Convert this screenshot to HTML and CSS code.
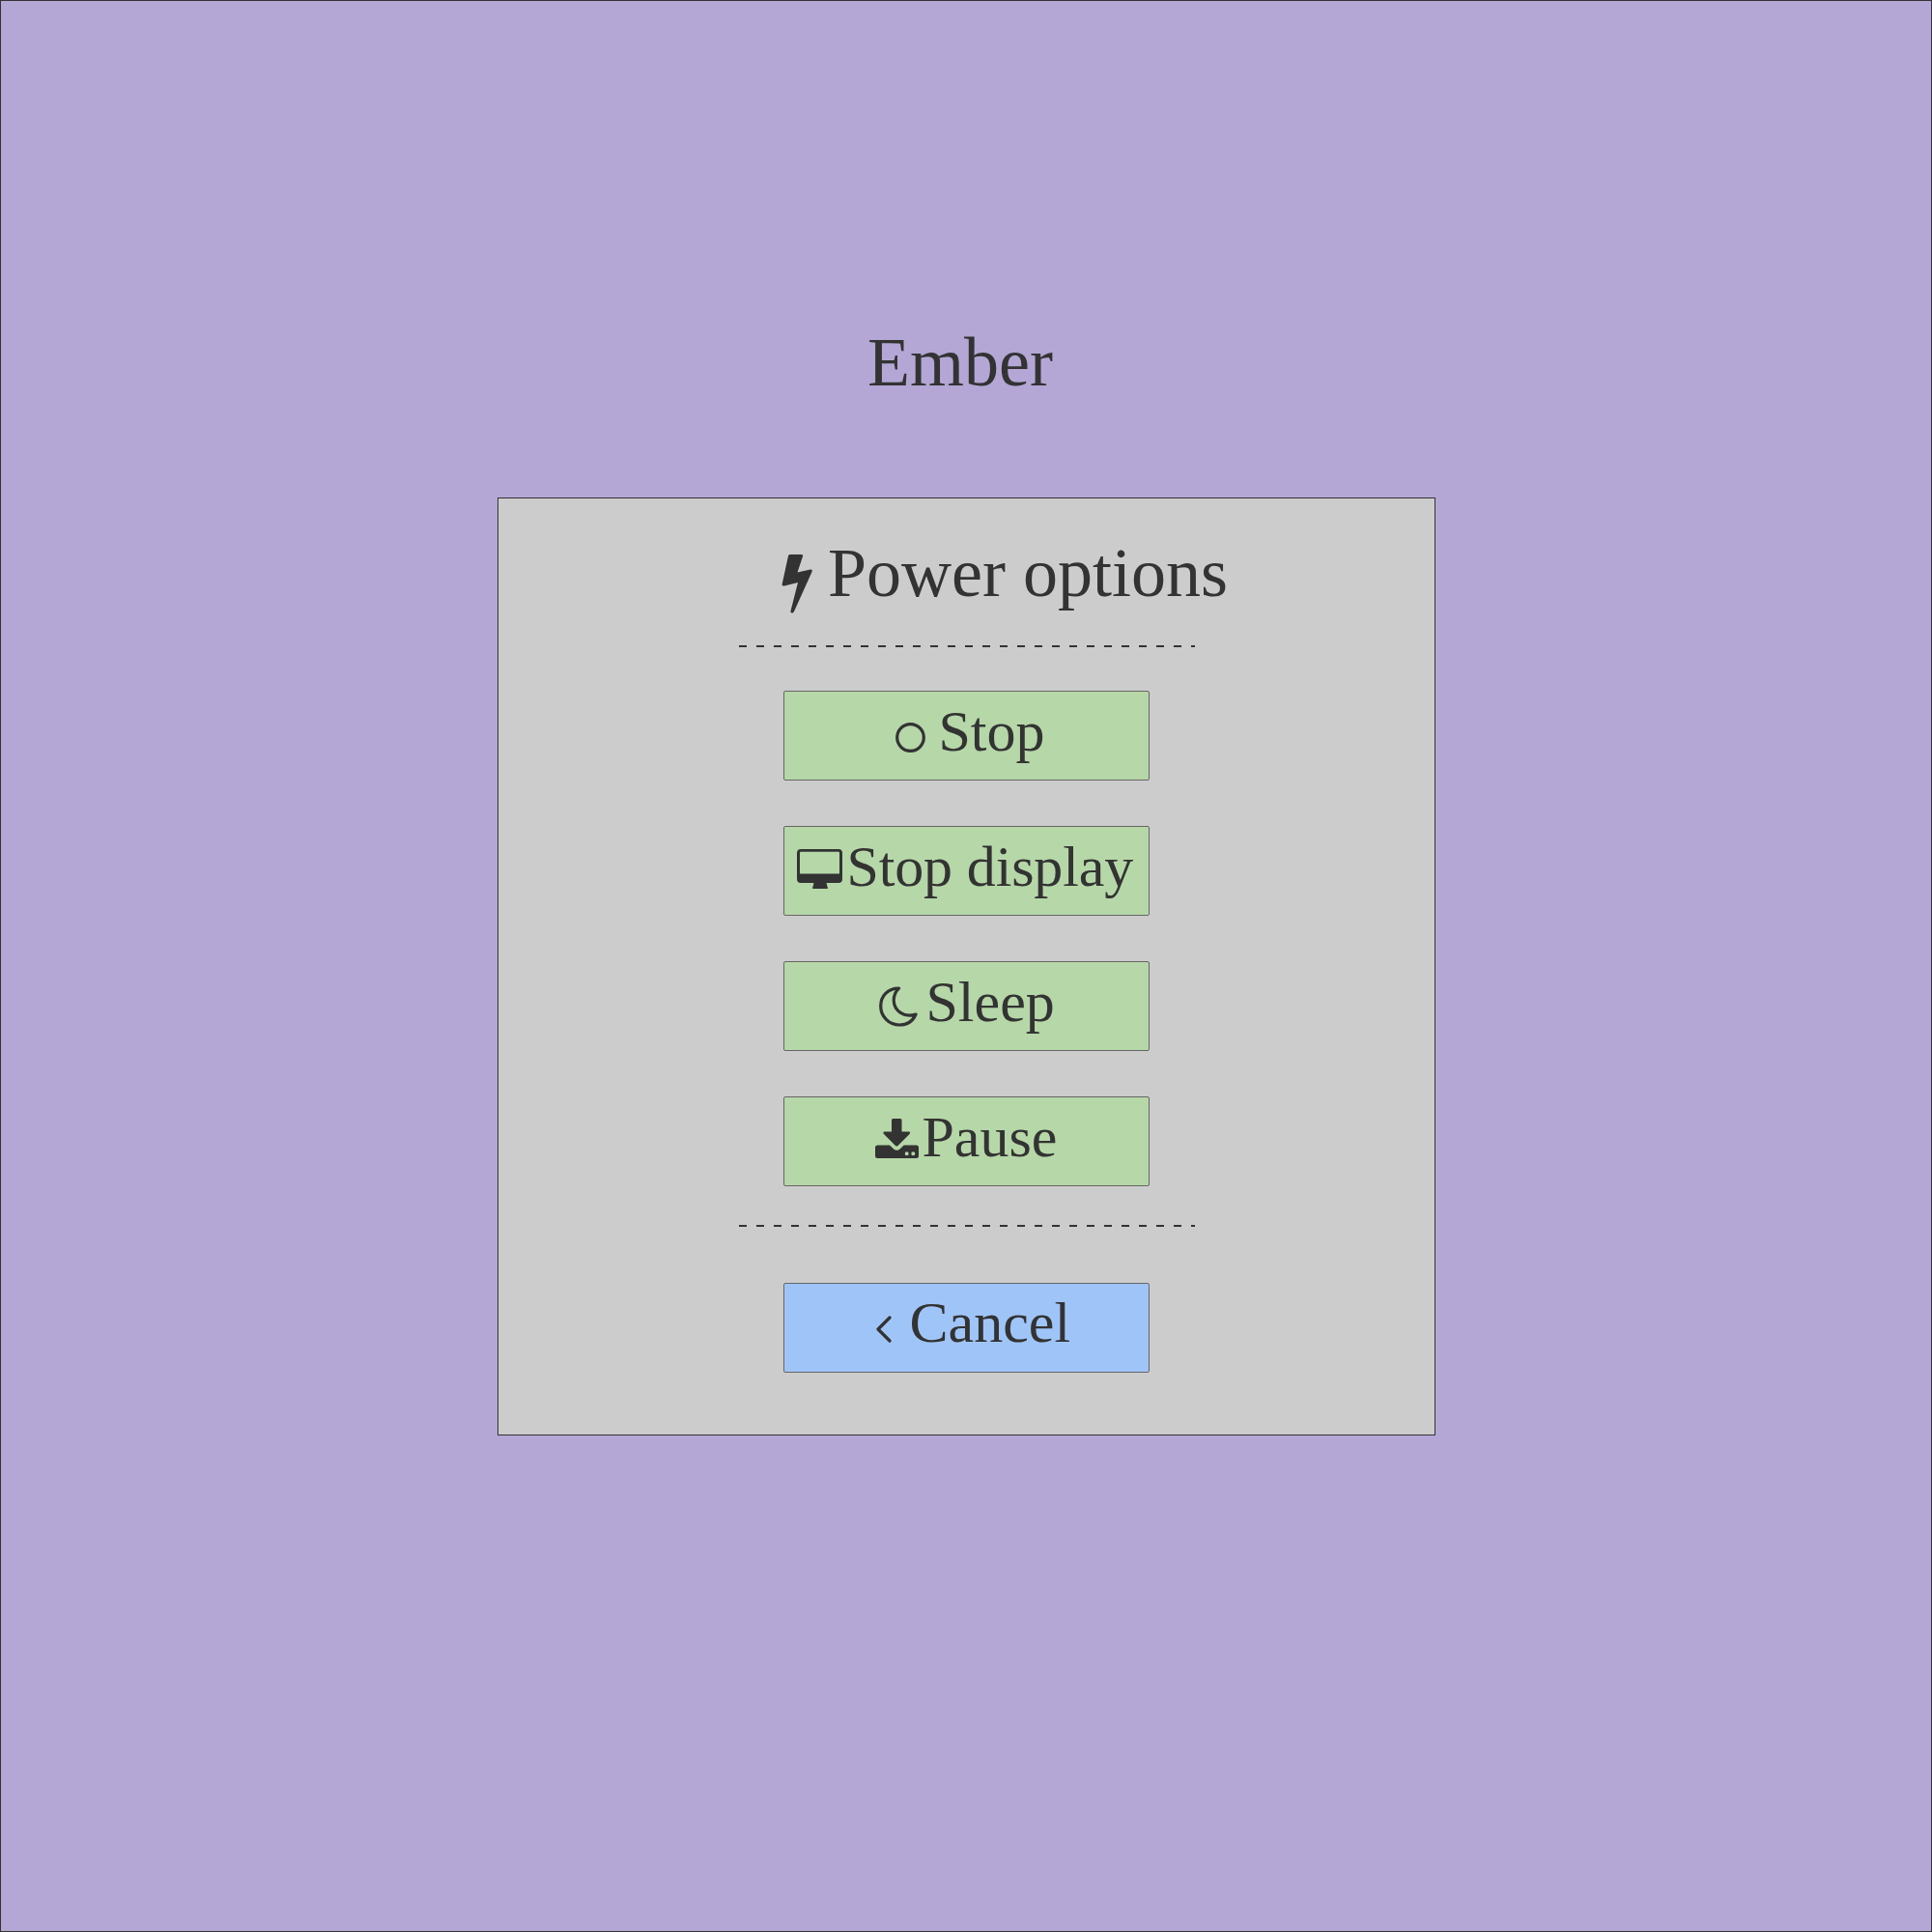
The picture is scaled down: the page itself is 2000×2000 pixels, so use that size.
FILE: index.html
```html
<!DOCTYPE html>
<html lang="en">
<head>
<meta charset="utf-8">
<title>Ember</title>
<link rel="stylesheet" href="styles.css">
</head>
<body>
<main class="screen">
  <h1 class="brand">Ember</h1>
  <section class="panel">
    <h2 class="title">
      <svg class="bolt" width="32" height="62" viewBox="0 0 32 62"><path d="M8.500 1H20.500Q22.500 1 22 3L16.500 19.500L30 16.500Q32.500 16.500 31.500 19L13 60Q12 62 10.500 61.500Q9 61 9.500 59.500L17 30L3 33.500Q0 34 .7 31.500L7 2.500Q7.400 1 8.500 1Z"/></svg>
      <span>Power options</span>
    </h2>
    <svg class="rule" width="472" height="2" viewBox="0 0 472 2"><path d="M0 1H472"/></svg>
    <div class="actions">
      <button class="option stop">
        <svg width="31" height="31" viewBox="0 0 31 31"><circle class="line" cx="15.500" cy="15.500" r="13.800"/></svg>
        <span>Stop</span>
      </button>
      <button class="option display">
        <svg width="47" height="41" viewBox="0 0 47 41"><path fill-rule="evenodd" d="M4 0H43Q47 0 47 4V31Q47 35 43 35H30.500L31.500 39L32 40Q32 41 31 41H17Q16 41 16 40L16.500 39L17.500 35H4Q0 35 0 31V4Q0 0 4 0ZM4 2.800Q3 2.800 3 4V25.500H44V4Q44 2.800 43 2.800Z"/></svg>
        <span>Stop display</span>
      </button>
      <button class="option sleep">
        <svg width="40" height="42" viewBox="0 0 40 42"><path class="line" d="M20.500 2.100C9 2 1.700 10 1.700 20.500C1.700 31.500 10.500 40 21 40C28.500 40 35 36 38 29C26 33 15.500 25.500 15.200 14.500C15.200 9.500 17 5.500 20.500 2.100Z"/></svg>
        <span>Sleep</span>
      </button>
      <button class="option pause">
        <svg width="45" height="41" viewBox="0 0 45 41"><path d="M18.500 0H26Q27.500 0 27.500 1.500V13.500H35Q37 14 35.500 16L23.500 28Q22.300 29.200 21 28L9 16Q7.500 14 9.500 13.500H17V1.500Q17 0 18.500 0Z"/><path fill-rule="evenodd" d="M2.500 27.500H15L19.200 31.500Q22.300 34 25.500 31.500L29.700 27.500H42.500Q45 27.500 45 30V38.500Q45 41 42.500 41H2.500Q0 41 0 38.500V30Q0 27.500 2.500 27.500ZM32.700 34.200a2 2 0 1 0 0 4a2 2 0 1 0 0-4ZM39.300 34.200a2 2 0 1 0 0 4a2 2 0 1 0 0-4Z"/></svg>
        <span>Pause</span>
      </button>
    </div>
    <svg class="rule lower" width="472" height="2" viewBox="0 0 472 2"><path d="M0 1H472"/></svg>
    <button class="option cancel">
      <svg width="16" height="28" viewBox="0 0 16 28"><path class="line chevron" d="M14 2L2 14L14 26"/></svg>
      <span>Cancel</span>
    </button>
  </section>
</main>
</body>
</html>
```
FILE: styles.css
```css
* { box-sizing: border-box; }
body { margin: 0; }
.screen {
  width: 2000px;
  height: 2000px;
  display: flex;
  flex-direction: column;
  align-items: center;
  border: 1px solid #333;
  background: #b4a7d6;
  color: #333;
  font-family: "Liberation Serif", serif;
}
.brand {
  margin: 332px 0 0;
  padding-right: 12px;
  font-size: 72px;
  line-height: 84px;
  font-weight: 400;
}
.panel {
  width: 971px;
  height: 971px;
  margin-top: 98px;
  display: flex;
  flex-direction: column;
  align-items: center;
  border: 1px solid #333;
  background: #ccc;
}
.title {
  display: flex;
  align-items: flex-start;
  gap: 16px;
  width: 463px;
  height: 84px;
  margin: 35px 0 0 81px;
  font-size: 72px;
  line-height: 84px;
  font-weight: 400;
  white-space: nowrap;
}
svg { display: block; flex: none; fill: #333; }
.bolt { margin-top: 22px; }
.rule { margin: 33px 0 0 2px; }
.rule path { fill: none; stroke: #333; stroke-width: 2; stroke-dasharray: 8 10; }
.actions {
  margin-top: 45px;
  display: flex;
  flex-direction: column;
  gap: 47px;
}
.option {
  width: 379px;
  height: 93px;
  padding: 0;
  display: flex;
  align-items: flex-start;
  border: 1px solid #666;
  border-radius: 2px;
  background: #b6d7a8;
  color: #333;
  font: 60px/70px "Liberation Serif", serif;
  white-space: nowrap;
}
.option span { margin-top: 6px; }
.line { fill: none; stroke: #333; stroke-width: 3.2; stroke-linejoin: round; }
.chevron { stroke-linecap: round; }
.stop { padding-left: 115px; gap: 14px; }
.stop svg { margin-top: 32px; }
.display { padding-left: 13px; gap: 5px; letter-spacing: -0.15px; }
.display svg { margin-top: 23px; }
.sleep { padding-left: 98px; gap: 9px; }
.sleep svg { margin-top: 25px; }
.pause { padding-left: 94px; gap: 4px; }
.pause svg { margin-top: 22px; }
.lower { margin-top: 40px; }
.cancel { margin-top: 58px; padding-left: 95px; gap: 19px; background: #9fc5f8; }
.cancel span { margin-top: 5px; }
.cancel svg { margin-top: 33px; }
```
